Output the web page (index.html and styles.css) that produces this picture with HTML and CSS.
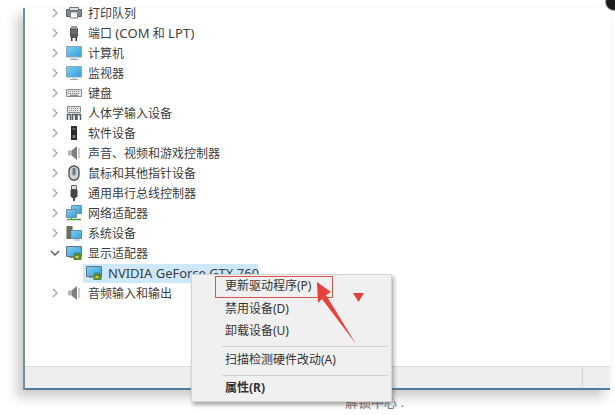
FILE: index.html
```html
<!DOCTYPE html>
<html lang="zh-CN">
<head>
<meta charset="utf-8">
<title>设备管理器</title>
<link rel="stylesheet" href="styles.css">
</head>
<body>
<svg class="defs" width="0" height="0" aria-hidden="true">
  <defs>
    <linearGradient id="scr" x1="0" y1="0" x2="1" y2="1"><stop offset="0" stop-color="#7fd0f2"/><stop offset="1" stop-color="#2f9fdc"/></linearGradient>
    <symbol id="chev" viewBox="0 0 10 10"><path d="M3 1l4 4-4 4" fill="none" stroke="#a6a6a6" stroke-width="1.300"/></symbol>
    <symbol id="chevd" viewBox="0 0 10 10"><path d="M1 3l4 4 4-4" fill="none" stroke="#555" stroke-width="1.300"/></symbol>
    <symbol id="printer" viewBox="0 0 16 16"><path d="M0.500 4.500h15v7h-15z" fill="#7f8a92" stroke="#59636a"/><path d="M3.500 2.500h9v3h-9z" fill="#d8dde0" stroke="#6b7278"/><path d="M4.500 7h7v6h-7z" fill="#fff" stroke="#7a7a7a"/></symbol>
    <symbol id="port" viewBox="0 0 16 16"><path d="M4 3h8v8l-1 2H5l-1-2z" fill="#555"/><path d="M5 1h6v3H5z" fill="#999"/><path d="M5 13h1.500v3H5zM9.500 13H11v3H9.500z" fill="#333"/><path d="M5.500 6h5M5.500 8h5" stroke="#888"/></symbol>
    <symbol id="monitor" viewBox="0 0 16 16"><path d="M0.500 1.500h15v10.500h-15z" fill="url(#scr)" stroke="#8aa6b8"/><path d="M4 14h8v1H4z" fill="#9aa7b0"/><path d="M6.500 12h3v2h-3z" fill="#c4ced4"/></symbol>
    <symbol id="keyboard" viewBox="0 0 16 16"><path d="M0.500 4.500h15v7h-15z" fill="#e2e2e2" stroke="#8a8a8a"/><path d="M2 6.500h12M2 8.500h12" stroke="#808080" stroke-dasharray="1 1"/><path d="M4 10.300h8" stroke="#777"/></symbol>
    <symbol id="hid" viewBox="0 0 16 16"><path d="M1.500 1.500h13v6h-13z" fill="#e4e7e9" stroke="#8a8a8a"/><path d="M3 3.500h10M3 5.500h10" stroke="#888" stroke-dasharray="1 1"/><path d="M1.500 15V9.500h3V15M6.500 15V9.500h3V15M11 15V9.500h3.500V15" fill="none" stroke="#4f5f6a" stroke-width="1.500"/></symbol>
    <symbol id="device" viewBox="0 0 16 16"><path d="M5 1h6v14H5z" fill="#2b2b2b"/><path d="M6.500 10h3v3h-3z" fill="#6f7f66"/><path d="M6.500 3h3v2h-3z" fill="#666"/></symbol>
    <symbol id="sound" viewBox="0 0 16 16"><path d="M2 5.500h3.500v5H2z" fill="#b5b5b5"/><path d="M5.500 5.500L11 1v14l-5.500-4.500z" fill="#808080"/><path d="M13 3v10" stroke="#cfcfcf" stroke-width="2"/></symbol>
    <symbol id="mouse" viewBox="0 0 16 16"><rect x="3" y="0.800" width="10" height="14.400" rx="5" fill="#c9d3da" stroke="#3f3f3f" stroke-width="1.200"/><rect x="6.500" y="2.500" width="3" height="8" rx="1.500" fill="#6d7780"/></symbol>
    <symbol id="usb" viewBox="0 0 16 16"><path d="M5.500 0.500h5v4h-5z" fill="#ddd" stroke="#666"/><path d="M4.500 4.500h7v7l-2 1.500h-3l-2-1.500z" fill="#444"/><path d="M7 13h2v3H7z" fill="#444"/></symbol>
    <symbol id="network" viewBox="0 0 16 16"><path d="M5.500 0.500h10v8h-10z" fill="url(#scr)" stroke="#6d8ea5"/><path d="M0.500 4.500h10v8h-10z" fill="url(#scr)" stroke="#6d8ea5"/><path d="M1 14.500h14" stroke="#4a9c3f" stroke-width="1.500"/><path d="M5.500 12.500v2" stroke="#4a9c3f"/></symbol>
    <symbol id="system" viewBox="0 0 16 16"><path d="M0.500 1h6v13h-6z" fill="#6b6f55"/><path d="M5 5.500h10.500v8H5z" fill="url(#scr)" stroke="#6d8ea5"/><path d="M8 15h6" stroke="#8aa6b8"/></symbol>
    <symbol id="display" viewBox="0 0 16 16"><path d="M0.500 1.500h15v10h-15z" fill="url(#scr)" stroke="#62737f"/><path d="M3 12h8v1H3z" fill="#8a979f"/><path d="M7.500 9h8v6h-8z" fill="#5c8a2e"/><path d="M9 9v-1.500M11 9v-1.500M13 9v-1.500" stroke="#3b5d1c"/><path d="M9.500 11h3v2h-3z" fill="#d9c84a"/></symbol>
  </defs>
</svg>

<main class="window">
  <ul class="tree">
    <li class="row"><svg class="chev"><use href="#chev"/></svg><svg class="ico"><use href="#printer"/></svg><span>打印队列</span></li>
    <li class="row"><svg class="chev"><use href="#chev"/></svg><svg class="ico"><use href="#port"/></svg><span>端口 <span class="latin">(COM</span> 和 <span class="latin">LPT)</span></span></li>
    <li class="row"><svg class="chev"><use href="#chev"/></svg><svg class="ico"><use href="#monitor"/></svg><span>计算机</span></li>
    <li class="row"><svg class="chev"><use href="#chev"/></svg><svg class="ico"><use href="#monitor"/></svg><span>监视器</span></li>
    <li class="row"><svg class="chev"><use href="#chev"/></svg><svg class="ico"><use href="#keyboard"/></svg><span>键盘</span></li>
    <li class="row"><svg class="chev"><use href="#chev"/></svg><svg class="ico"><use href="#hid"/></svg><span>人体学输入设备</span></li>
    <li class="row"><svg class="chev"><use href="#chev"/></svg><svg class="ico"><use href="#device"/></svg><span>软件设备</span></li>
    <li class="row"><svg class="chev"><use href="#chev"/></svg><svg class="ico"><use href="#sound"/></svg><span>声音、视频和游戏控制器</span></li>
    <li class="row"><svg class="chev"><use href="#chev"/></svg><svg class="ico"><use href="#mouse"/></svg><span>鼠标和其他指针设备</span></li>
    <li class="row"><svg class="chev"><use href="#chev"/></svg><svg class="ico"><use href="#usb"/></svg><span>通用串行总线控制器</span></li>
    <li class="row"><svg class="chev"><use href="#chev"/></svg><svg class="ico"><use href="#network"/></svg><span>网络适配器</span></li>
    <li class="row"><svg class="chev"><use href="#chev"/></svg><svg class="ico"><use href="#system"/></svg><span>系统设备</span></li>
    <li class="row"><svg class="chev"><use href="#chevd"/></svg><svg class="ico"><use href="#display"/></svg><span>显示适配器</span></li>
    <li class="row child"><span class="selected"><svg class="ico"><use href="#display"/></svg><span>NVIDIA GeForce GTX 760</span></span></li>
    <li class="row"><svg class="chev"><use href="#chev"/></svg><svg class="ico"><use href="#sound"/></svg><span>音频输入和输出</span></li>
  </ul>
  <footer class="status"><span class="status-end"></span></footer>
</main>

<span class="corner" aria-hidden="true"></span>
<span class="below">解锁中心 .</span>

<nav class="menu">
  <div class="item first">更新驱动程序(P)</div>
  <div class="item second">禁用设备(D)</div>
  <div class="item third">卸载设备(U)</div>
  <hr class="sep">
  <div class="item scan">扫描检测硬件改动(A)</div>
  <hr class="sep">
  <div class="item bold">属性(R)</div>
</nav>

<span class="highlight" aria-hidden="true"></span>
<svg class="mark" width="615" height="415" viewBox="0 0 615 415" aria-hidden="true">
  <path d="M353 293h11l-5.500 9z" fill="#e2403b"/>
  <path d="M317 282l14 10-5 3L356 344 322 299l-4 4z" fill="#e8403a"/>
</svg>
</body>
</html>
```
FILE: styles.css
```css
html, body {
  margin: 0;
  padding: 0;
}
body {
  width: 615px;
  height: 415px;
  position: relative;
  overflow: hidden;
  background: #fff;
  font-family: "Noto Sans", "Noto Sans CJK SC", sans-serif;
  font-size: 12px;
  color: #3d3d3d;
}
.defs {
  position: absolute;
}
.window {
  box-sizing: border-box;
  width: 587px;
  height: 382px;
  margin: 8px 0 0 23px;
  display: flex;
  flex-direction: column;
  background: #fff;
  border-left: 2px solid #6f8da6;
  box-shadow: -6px 7px 11px rgba(90, 80, 70, 0.3);
}
.tree {
  list-style: none;
  margin: -5px 0 0;
  padding: 0;
  flex: 1;
}
.row {
  height: 20px;
  display: flex;
  align-items: center;
  padding-left: 25px;
  white-space: nowrap;
}
.latin {
  font-size: 13px;
  letter-spacing: 0.2px;
}
.chev {
  width: 10px;
  height: 10px;
  margin-right: 6px;
  flex: none;
}
.ico {
  width: 16px;
  height: 16px;
  margin-right: 6px;
  flex: none;
}
.child {
  padding-left: 58px;
}
.selected {
  display: flex;
  align-items: center;
  width: 175px;
  height: 19px;
  padding-left: 3px;
  box-sizing: border-box;
  background: #cde8fb;
  font-size: 13px;
}
.status {
  height: 24px;
  box-sizing: border-box;
  background: #eeeeee;
  border-top: 1px solid #dcdcdc;
  border-bottom: 2px solid #4f7c9c;
  display: flex;
  justify-content: flex-end;
}
.status-end {
  width: 27px;
  border-left: 1px solid #d6d6d6;
}
.corner {
  position: absolute;
  right: -8px;
  top: -7px;
  width: 16px;
  height: 16px;
  border-radius: 50%;
  background: #1c1c1c;
  border: 1px solid #aaa;
}
.below {
  position: absolute;
  left: 345px;
  top: 394px;
  font-size: 13px;
  line-height: 16px;
  color: #777;
}
.menu {
  position: absolute;
  left: 191px;
  top: 274px;
  width: 201px;
  height: 128px;
  box-sizing: border-box;
  background: #f0f0f0;
  border: 1px solid #d4d4d4;
  box-shadow: 2px 3px 4px rgba(70, 70, 70, 0.45);
  color: #333;
}
.item {
  position: absolute;
  left: 33px;
  line-height: 18px;
  white-space: nowrap;
}
.first { top: 2px; }
.second { top: 25px; }
.third { top: 47px; }
.scan { top: 76px; }
.bold { top: 104px; font-weight: 700; }
.sep {
  position: absolute;
  left: 30px;
  right: 3px;
  margin: 0;
  border: 0;
  height: 1px;
  background: #d2d2d2;
}
.sep:nth-of-type(1) { top: 71px; }
.sep:nth-of-type(2) { top: 100px; }
.highlight {
  position: absolute;
  left: 215px;
  top: 276px;
  width: 118px;
  height: 22px;
  box-sizing: border-box;
  border: 1px solid #d9534f;
}
.mark {
  position: absolute;
  left: 0;
  top: 0;
  pointer-events: none;
}
```
